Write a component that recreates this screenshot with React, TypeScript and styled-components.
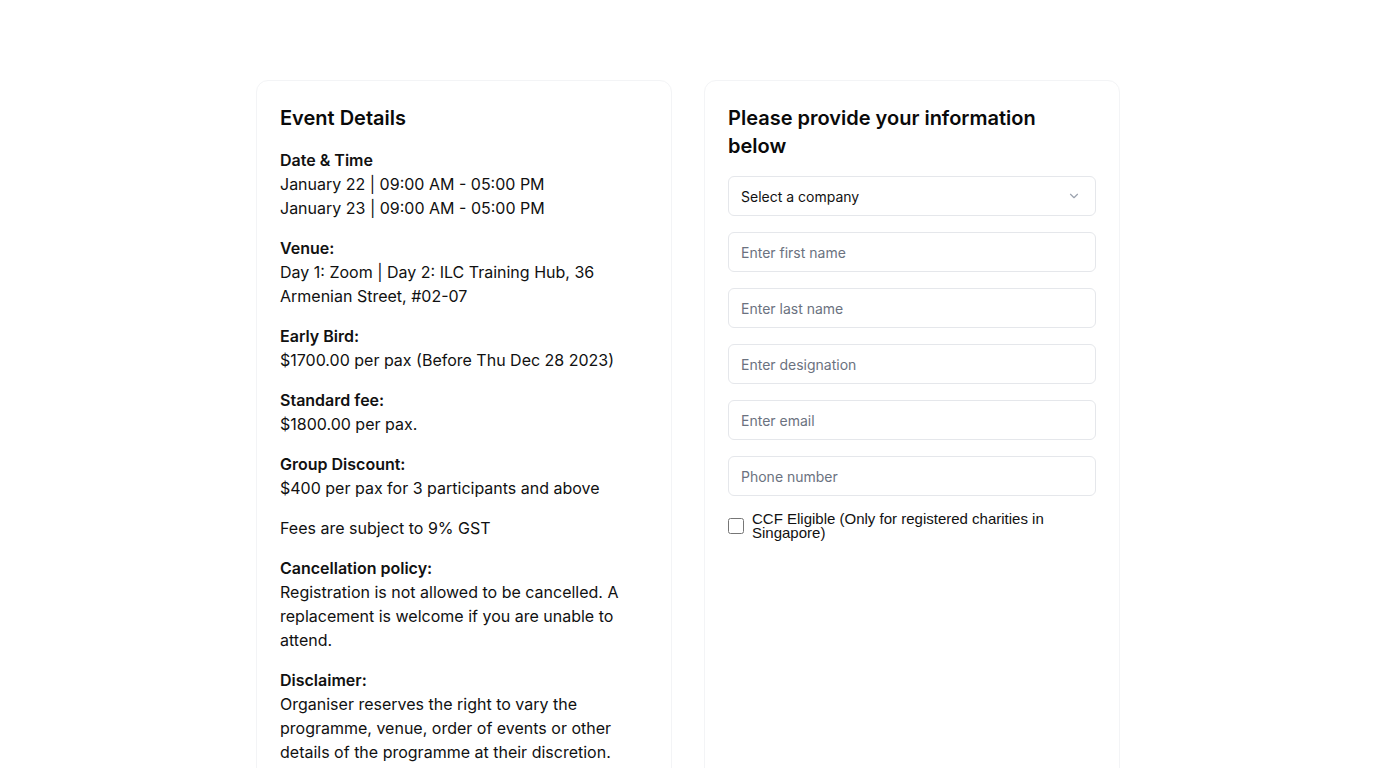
import React from "react";
import styled, { createGlobalStyle } from "styled-components";

const GlobalStyle = createGlobalStyle`
  body {
    margin: 0;
    background: #ffffff;
    font-family: Inter, "Noto Sans", sans-serif;
    color: #111111;
  }
`;

const Page = styled.div`
  display: flex;
  justify-content: center;
  padding: 80px 0 40px;
`;

const Columns = styled.div`
  display: grid;
  grid-template-columns: 416px 416px;
  gap: 32px;
  align-items: stretch;
`;

const Card = styled.div`
  border: 1px solid #f3f4f6;
  border-radius: 12px;
  padding: 23px;
  background: #fff;
`;

const CardTitle = styled.h2`
  margin: 0 0 16px;
  font-size: 20px;
  line-height: 28px;
  font-weight: 600;
  color: #0a0a0a;
`;

const Section = styled.div`
  font-size: 16px;
  line-height: 24px;
  margin-bottom: 16px;
`;

const Label = styled.div`
  font-weight: 600;
`;

const Form = styled.div`
  display: flex;
  flex-direction: column;
  gap: 16px;
`;

const Field = styled.input`
  box-sizing: border-box;
  width: 100%;
  height: 40px;
  border: 1px solid #e5e7eb;
  border-radius: 6px;
  padding: 0 12px;
  font-family: Inter, sans-serif;
  font-size: 14px;
  color: #111;
  outline: none;
  &::placeholder {
    color: #6b7280;
  }
`;

const SelectBox = styled.div`
  box-sizing: border-box;
  height: 40px;
  border: 1px solid #e5e7eb;
  border-radius: 6px;
  padding: 0 14px 0 12px;
  display: flex;
  align-items: center;
  justify-content: space-between;
  font-size: 14px;
  color: #111;
`;

const CheckRow = styled.label`
  display: flex;
  align-items: center;
  gap: 8px;
  font-family: "Liberation Sans", Arial, sans-serif;
  font-size: 15px;
  line-height: 14px;
  color: #111;
`;

const Box = styled.input`
  margin: 0;
  width: 16px;
  height: 16px;
  flex-shrink: 0;
`;

const Chevron = () => (
  <svg width="14" height="14" viewBox="0 0 24 24" fill="none" stroke="#9ca3af" strokeWidth="2" strokeLinecap="round" strokeLinejoin="round">
    <path d="m6 9 6 6 6-6" />
  </svg>
);

const details = [
  { label: "Date & Time", lines: ["January 22 | 09:00 AM - 05:00 PM", "January 23 | 09:00 AM - 05:00 PM"] },
  { label: "Venue:", lines: ["Day 1: Zoom | Day 2: ILC Training Hub, 36 Armenian Street, #02-07"] },
  { label: "Early Bird:", lines: ["$1700.00 per pax (Before Thu Dec 28 2023)"] },
  { label: "Standard fee:", lines: ["$1800.00 per pax."] },
  { label: "Group Discount:", lines: ["$400 per pax for 3 participants and above"] },
  { label: "", lines: ["Fees are subject to 9% GST"] },
  { label: "Cancellation policy:", lines: ["Registration is not allowed to be cancelled. A replacement is welcome if you are unable to attend."] },
  { label: "Disclaimer:", lines: ["Organiser reserves the right to vary the programme, venue, order of events or other details of the programme at their discretion."] },
];

const fields = ["Enter first name", "Enter last name", "Enter designation", "Enter email", "Phone number"];

export default function App() {
  return (
    <>
      <GlobalStyle />
      <Page>
        <Columns>
          <Card>
            <CardTitle>Event Details</CardTitle>
            {details.map((d, i) => (
              <Section key={i}>
                {d.label && <Label>{d.label}</Label>}
                {d.lines.map((l) => (
                  <div key={l}>{l}</div>
                ))}
              </Section>
            ))}
          </Card>
          <Card>
            <CardTitle>
              Please provide your information
              <br />
              below
            </CardTitle>
            <Form>
              <SelectBox>
                <span>Select a company</span>
                <Chevron />
              </SelectBox>
              {fields.map((f) => (
                <Field key={f} placeholder={f} />
              ))}
              <CheckRow>
                <Box type="checkbox" />
                <span>CCF Eligible (Only for registered charities in Singapore)</span>
              </CheckRow>
            </Form>
          </Card>
        </Columns>
      </Page>
    </>
  );
}
